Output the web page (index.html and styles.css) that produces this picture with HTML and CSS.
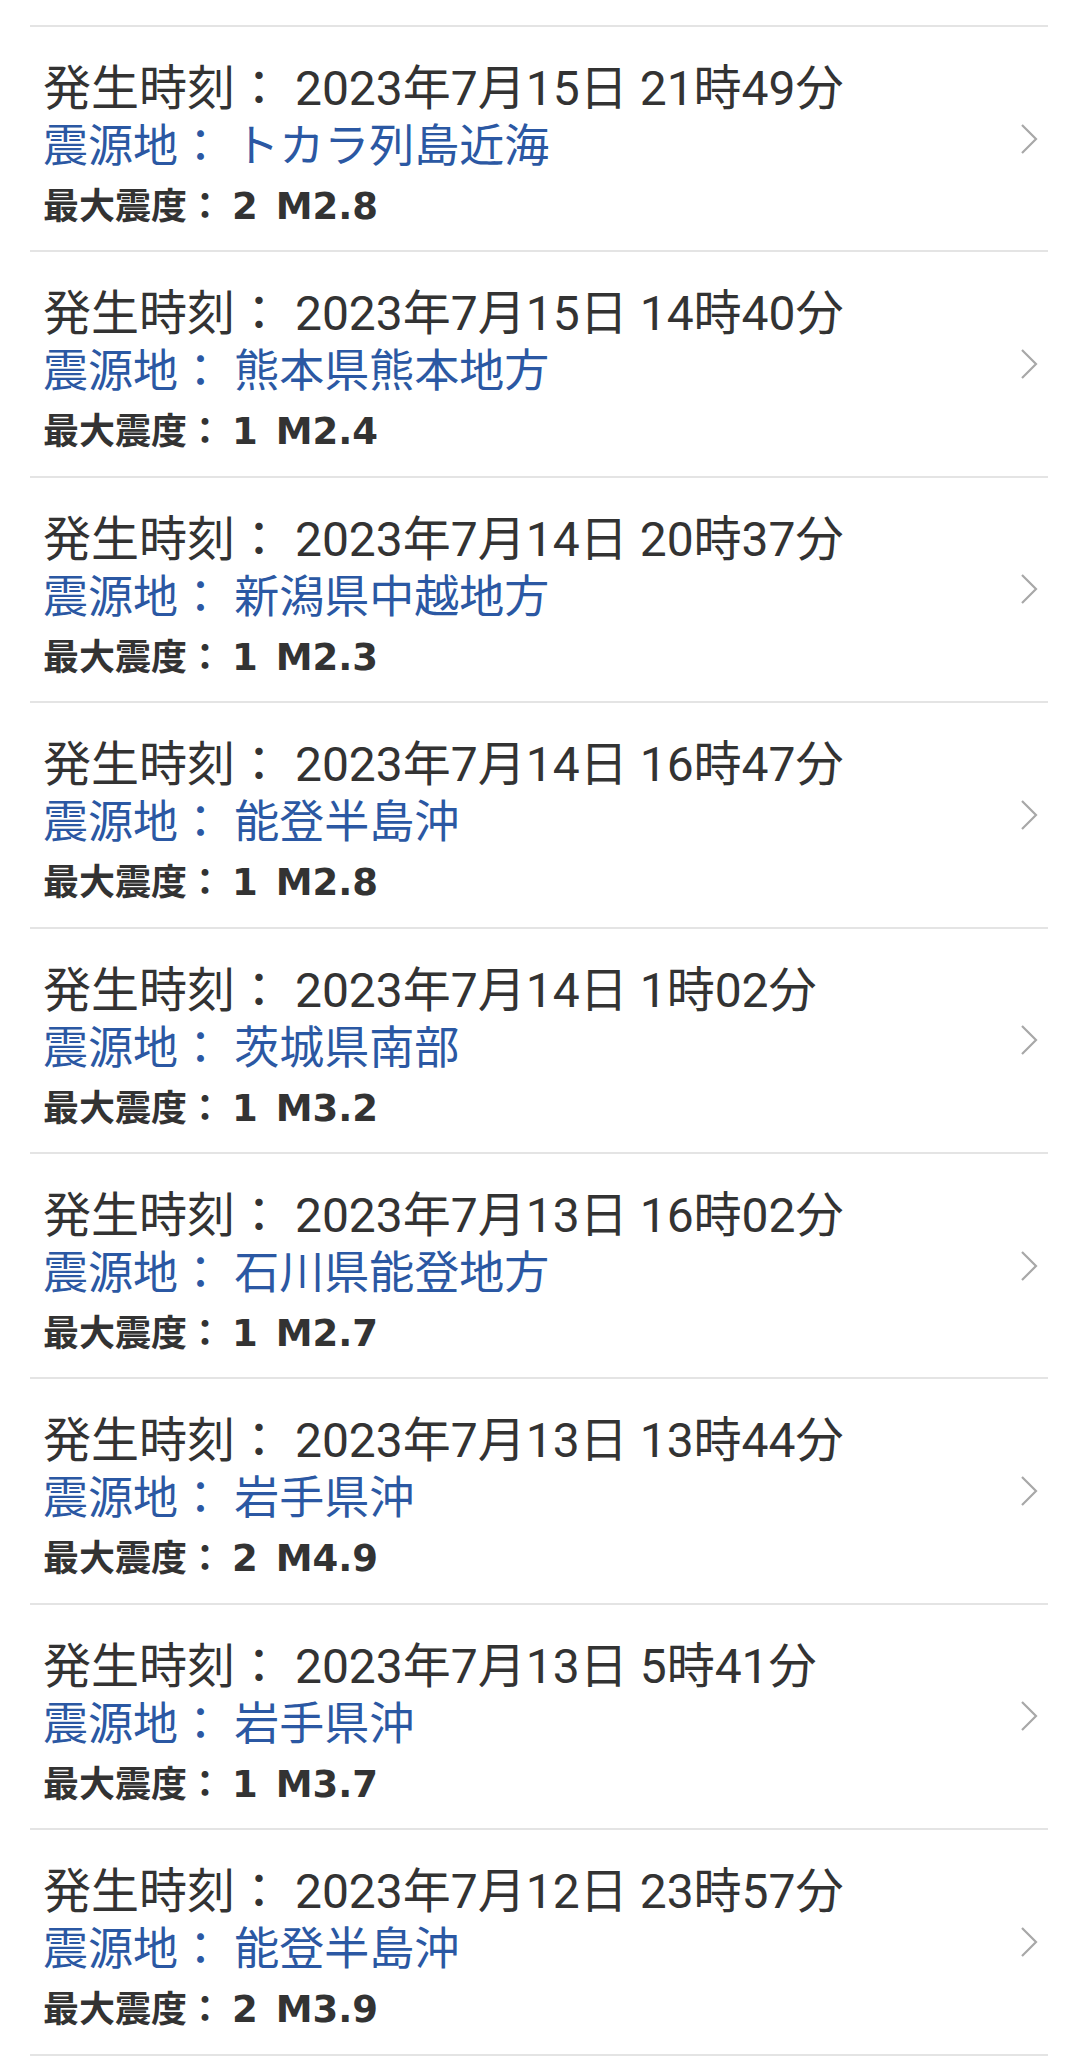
FILE: index.html
```html
<!DOCTYPE html>
<html lang="ja">
<head>
  <meta charset="UTF-8">
  <meta name="viewport" content="width=device-width, initial-scale=1.0">
  <title>地震情報</title>
  <link rel="stylesheet" href="styles.css">
</head>
<body>
  <ul class="quake-list">
    <li class="quake">
      <div class="info">
        <div class="time">発生時刻： 2023年7月15日 21時49分</div>
        <div class="place">震源地： トカラ列島近海</div>
        <div class="scale">最大震度：<span class="value">2 M2.8</span></div>
      </div>
      <svg class="arrow" width="20" height="32" viewBox="0 0 20 32"><polyline points="3,2 17,16 3,30" /></svg>
    </li>
    <li class="quake">
      <div class="info">
        <div class="time">発生時刻： 2023年7月15日 14時40分</div>
        <div class="place">震源地： 熊本県熊本地方</div>
        <div class="scale">最大震度：<span class="value">1 M2.4</span></div>
      </div>
      <svg class="arrow" width="20" height="32" viewBox="0 0 20 32"><polyline points="3,2 17,16 3,30" /></svg>
    </li>
    <li class="quake">
      <div class="info">
        <div class="time">発生時刻： 2023年7月14日 20時37分</div>
        <div class="place">震源地： 新潟県中越地方</div>
        <div class="scale">最大震度：<span class="value">1 M2.3</span></div>
      </div>
      <svg class="arrow" width="20" height="32" viewBox="0 0 20 32"><polyline points="3,2 17,16 3,30" /></svg>
    </li>
    <li class="quake">
      <div class="info">
        <div class="time">発生時刻： 2023年7月14日 16時47分</div>
        <div class="place">震源地： 能登半島沖</div>
        <div class="scale">最大震度：<span class="value">1 M2.8</span></div>
      </div>
      <svg class="arrow" width="20" height="32" viewBox="0 0 20 32"><polyline points="3,2 17,16 3,30" /></svg>
    </li>
    <li class="quake">
      <div class="info">
        <div class="time">発生時刻： 2023年7月14日 1時02分</div>
        <div class="place">震源地： 茨城県南部</div>
        <div class="scale">最大震度：<span class="value">1 M3.2</span></div>
      </div>
      <svg class="arrow" width="20" height="32" viewBox="0 0 20 32"><polyline points="3,2 17,16 3,30" /></svg>
    </li>
    <li class="quake">
      <div class="info">
        <div class="time">発生時刻： 2023年7月13日 16時02分</div>
        <div class="place">震源地： 石川県能登地方</div>
        <div class="scale">最大震度：<span class="value">1 M2.7</span></div>
      </div>
      <svg class="arrow" width="20" height="32" viewBox="0 0 20 32"><polyline points="3,2 17,16 3,30" /></svg>
    </li>
    <li class="quake">
      <div class="info">
        <div class="time">発生時刻： 2023年7月13日 13時44分</div>
        <div class="place">震源地： 岩手県沖</div>
        <div class="scale">最大震度：<span class="value">2 M4.9</span></div>
      </div>
      <svg class="arrow" width="20" height="32" viewBox="0 0 20 32"><polyline points="3,2 17,16 3,30" /></svg>
    </li>
    <li class="quake">
      <div class="info">
        <div class="time">発生時刻： 2023年7月13日 5時41分</div>
        <div class="place">震源地： 岩手県沖</div>
        <div class="scale">最大震度：<span class="value">1 M3.7</span></div>
      </div>
      <svg class="arrow" width="20" height="32" viewBox="0 0 20 32"><polyline points="3,2 17,16 3,30" /></svg>
    </li>
    <li class="quake">
      <div class="info">
        <div class="time">発生時刻： 2023年7月12日 23時57分</div>
        <div class="place">震源地： 能登半島沖</div>
        <div class="scale">最大震度：<span class="value">2 M3.9</span></div>
      </div>
      <svg class="arrow" width="20" height="32" viewBox="0 0 20 32"><polyline points="3,2 17,16 3,30" /></svg>
    </li>
  </ul>
</body>
</html>
```

FILE: styles.css
```css
* {
  box-sizing: border-box;
}

body {
  margin: 0;
  background: #fff;
  font-family: Roboto, "Noto Sans CJK JP", sans-serif;
  color: #333;
}

.quake-list {
  list-style: none;
  margin: 25px 17px 0 30px;
  padding: 0;
  border-top: 2px solid #e4e4e4;
}

.quake {
  display: flex;
  align-items: center;
  height: 225.4px;
  padding: 0 9px 0 13px;
  border-bottom: 2px solid #e4e4e4;
}

.info {
  flex: 1;
  align-self: flex-start;
  padding-top: 33px;
}

.time,
.place {
  white-space: nowrap;
}

.time {
  font-size: 48px;
  line-height: 58px;
}

.place {
  font-size: 45px;
  line-height: 58px;
  color: #2b58a3;
}

.scale {
  font-family: "Noto Sans CJK JP", sans-serif;
  font-size: 36px;
  font-weight: bold;
  line-height: 54px;
  height: 54px;
}

.scale .value {
  font-family: "DejaVu Sans", sans-serif;
  font-size: 37px;
  line-height: 37px;
  margin-left: 9px;
  word-spacing: 5px;
}

.arrow {
  fill: none;
  stroke: #a8a8a8;
  stroke-width: 2.2;
}
```
